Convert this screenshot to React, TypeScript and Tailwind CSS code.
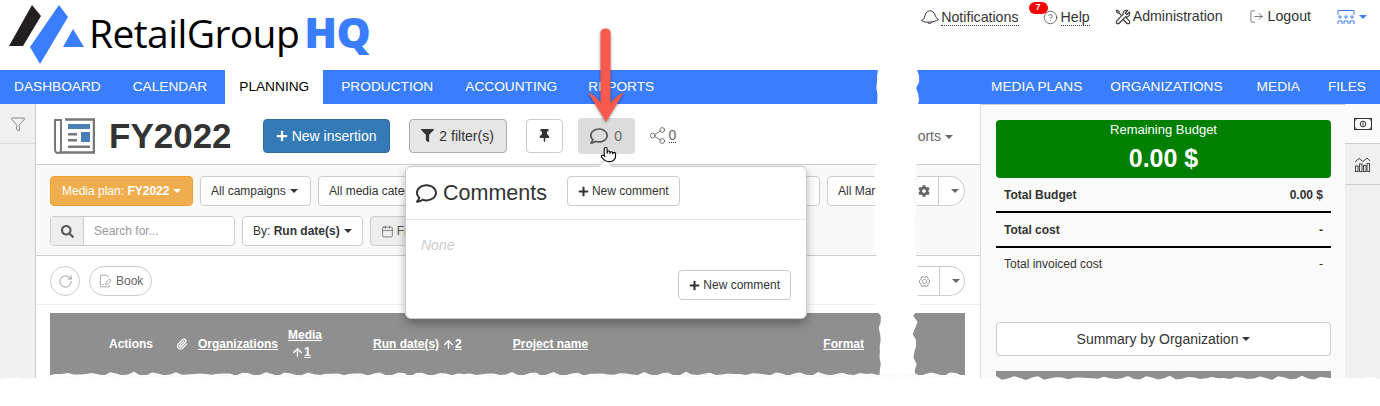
import { CircleHelp, LogOut, Filter, Share2, Calendar, RotateCw, FileSignature, Paperclip, ArrowUp, Pointer } from "lucide-react";
import { FaRegComment, FaFilter, FaThumbtack, FaSearch, FaCog, FaPlus } from "react-icons/fa";
import { LiaToolsSolid } from "react-icons/lia";
import { PiGearSixLight } from "react-icons/pi";

const Caret = () => (
  <span className="ml-1 inline-block h-0 w-0 border-x-4 border-t-4 border-x-transparent border-t-current align-middle" />
);

const NavItem = ({ label, active, className = "" }: { label: string; active?: boolean; className?: string }) => (
  <a className={`flex h-full items-center pt-[1px] text-[13.7px] ${active ? "bg-white text-black" : "text-white"} ${className}`}>{label}</a>
);

const SmallButton = ({ children, className = "" }: { children?: React.ReactNode; className?: string }) => (
  <div className={`flex h-[30px] shrink-0 items-center rounded border border-[#ccc] bg-white px-[10px] text-xs whitespace-nowrap text-[#333] ${className}`}>
    {children}
  </div>
);

// repeatable wobble for the torn paper edges
const wobble = (i: number, amp: number) =>
  (Math.sin(i * 1.7) * 0.5 + Math.sin(i * 4.3 + 1) * 0.3 + Math.sin(i * 9.1 + 2) * 0.2) * amp;

const tornBottom = (base: number, amp: number, width: number, height: number) => {
  let d = `M0 ${base}`;
  for (let x = 0, i = 0; x <= width; x += 6, i++) d += ` L${x} ${(base + wobble(i, amp)).toFixed(1)}`;
  return `${d} L${width} ${height} L0 ${height} Z`;
};

const tornStrip = () => {
  const left: string[] = [];
  const right: string[] = [];
  for (let y = 0, i = 0; y <= 310; y += 6, i++) {
    const l = 5 - (y > 90 && y < 190 ? 2 : 0) + (y > 240 ? 3 : 0);
    const r = 46 - (y > 90 && y < 190 ? 3 : 0) - (y > 240 ? 3 : 0);
    left.push(`L${(l + wobble(i, 2)).toFixed(1)} ${y}`);
    right.unshift(`L${(r + wobble(i + 40, 3)).toFixed(1)} ${y}`);
  }
  return `M5 0 ${left.join(" ")} ${right.join(" ")} Z`;
};

const TornEdges = () => (
  <>
    {/* Strip torn out of the page */}
    <svg className="absolute top-[70px] left-[872px]" width="50" height="310" viewBox="0 0 50 310">
      <path fill="#fff" d={tornStrip()} />
    </svg>
    {/* Pale row below the table head */}
    <svg className="absolute top-[368px] left-[50px]" width="915" height="14" viewBox="0 0 915 14">
      <path fill="#fbfbfb" d={tornBottom(6, 2.5, 915, 14)} />
    </svg>
    {/* Torn bottom of the page */}
    <svg className="absolute top-[370px] left-0" width="1380" height="36" viewBox="0 0 1380 36">
      <path fill="#fff" d={tornBottom(8, 2.5, 1380, 36)} />
    </svg>
  </>
);

const App = () => {
  return (
    <div className="relative h-[406px] w-[1380px] overflow-hidden bg-white font-['Liberation_Sans',sans-serif] text-[#333]">
      {/* Header */}
      <header className="flex h-[70px] justify-between">
        <div className="flex items-start pt-[4px] pl-[9px]">
          <svg width="78" height="62" viewBox="0 0 78 62" className="shrink-0">
            <path fill="#231f20" d="M0 42 L23 1 L32 12 L14 42 Z" />
            <path fill="#3a7eff" d="M21 43 L50 1 L59 13 L31 60 Z" />
            <path fill="#3a7eff" d="M54 43 L64 25 L75 43 Z" />
          </svg>
          <div className="mt-[5px] ml-[2px] flex items-baseline">
            <span className="font-['Open_Sans',sans-serif] text-[39px] leading-[46px] tracking-[-0.6px] text-black">RetailGroup</span>
            <span className="ml-[5px] font-['Open_Sans',sans-serif] text-[43px] leading-[46px] font-extrabold tracking-[-0.5px] text-[#3a7eff]">HQ</span>
          </div>
        </div>
        <div className="flex h-[34px] items-center pr-[13px] text-[14.2px] text-[#333]">
          <div className="relative flex items-center gap-[1px]">
            <svg width="20" height="16" viewBox="0 0 20 16" fill="none" stroke="currentColor" strokeWidth="1">
              <path d="M1.500 11.500 C4.500 10.500 4.500 7.500 5.500 5 C7 1 12 1 14 4 C15.500 6.500 15.500 9 18.500 10.500 C16 12 13 13 10 13 C7 13.500 3.500 13 1.500 11.500 Z" />
              <path d="M7.500 13.300 C8 15 11 15 12 12.800" />
            </svg>
            <span className="border-b border-dotted border-[#333] leading-4">Notifications</span>
            <span className="absolute -top-[7px] -right-[29px] flex h-[12px] w-[19px] items-center justify-center rounded-full bg-[#f00] text-[9px] font-bold text-white">7</span>
          </div>
          <div className="ml-[24px] flex items-center gap-[3px]">
            <CircleHelp size={15} strokeWidth={1.1} />
            <span className="border-b border-dotted border-[#333] leading-4">Help</span>
          </div>
          <div className="ml-[24px] flex items-center gap-[1px]">
            <LiaToolsSolid size={18} />
            <span>Administration</span>
          </div>
          <div className="ml-[26px] flex items-center gap-[4px]">
            <LogOut size={15} strokeWidth={1.1} className="text-[#444]" />
            <span>Logout</span>
          </div>
          <div className="ml-[26px] flex items-center text-[#3a7eff]">
            <svg width="18" height="16" viewBox="0 0 18 16" fill="none" stroke="currentColor" strokeWidth="1">
              <path d="M1 6 V1.500 H17 V6" />
              <circle cx="3" cy="8" r="1.200" />
              <circle cx="9" cy="8" r="1.200" />
              <circle cx="15" cy="8" r="1.200" />
              <path d="M1 15 V12 H5 V15 M7 15 V12 H11 V15 M13 15 V12 H17 V15" />
            </svg>
            <Caret />
          </div>
        </div>
      </header>

      {/* Nav */}
      <nav className="flex h-[34px] justify-between bg-[#3a7eff]">
        <div className="flex h-full">
          <NavItem label="DASHBOARD" className="pr-[16px] pl-[14px]" />
          <NavItem label="CALENDAR" className="pr-[18px] pl-[16px]" />
          <NavItem label="PLANNING" active className="px-[14px]" />
          <NavItem label="PRODUCTION" className="pr-[16px] pl-[18px]" />
          <NavItem label="ACCOUNTING" className="pr-[15px] pl-[16px]" />
          <NavItem label="REPORTS" className="px-[16px]" />
        </div>
        <div className="flex h-full">
          <NavItem label="MEDIA PLANS" className="px-[14px]" />
          <NavItem label="ORGANIZATIONS" className="pr-[17px] pl-[14px]" />
          <NavItem label="MEDIA" className="pr-[14px] pl-[17px]" />
          <NavItem label="FILES" className="px-[14px]" />
        </div>
      </nav>

      {/* Body */}
      <div className="flex h-[302px]">
        <aside className="w-[36px] shrink-0 border-r border-[#ccc] bg-[#f0f0f0]">
          <div className="flex h-[40px] items-center justify-center border-b border-[#ddd]">
            <Filter size={16} strokeWidth={1} className="text-[#555]" />
          </div>
        </aside>

        <main className="min-w-0 flex-1 border-r border-[#ddd]">
          {/* Title row */}
          <div className="flex h-[61px] items-center border-b border-[#ccc] pt-[3px] pl-[17px]">
            <svg width="42" height="36" viewBox="0 0 42 36" fill="none" className="shrink-0">
              <path stroke="#777" strokeWidth="2" d="M2 2 V31 Q2 35 5 35 Q8 35 8 31 V2 Z" />
              <path stroke="#777" strokeWidth="2.500" d="M12 1.500 H41 V34.500 H7" />
              <rect x="15" y="6" width="22" height="5" fill="#4a7fb5" />
              <rect x="15" y="15" width="9" height="2.500" fill="#777" />
              <rect x="15" y="21" width="9" height="2.500" fill="#777" />
              <rect x="28" y="14" width="9" height="10" fill="#4a7fb5" />
              <rect x="15" y="27.500" width="22" height="2.500" fill="#777" />
            </svg>
            <h1 className="ml-[14px] text-[35px] leading-none font-bold text-[#333]">FY2022</h1>
            <div className="ml-[31px] flex h-[34px] w-[127px] items-center justify-center rounded border border-[#2e6da4] bg-[#337ab7] text-sm text-white">
              <FaPlus size={12} className="mr-[4px]" />
              New insertion
            </div>
            <div className="ml-[19px] flex h-[34px] w-[98px] items-center justify-center rounded border border-[#adadad] bg-[#e6e6e6] text-sm text-[#333]">
              <FaFilter size={13} className="mr-[5px]" />
              2 filter(s)
            </div>
            <div className="ml-[19px] flex h-[34px] w-[37px] items-center justify-center rounded border border-[#ccc] bg-white">
              <FaThumbtack size={13} />
            </div>
            <div className="ml-[15px] flex h-[36px] w-[57px] items-center justify-center gap-[6px] rounded bg-[#dcdcdc] text-sm text-[#666]">
              <FaRegComment size={18} className="text-[#555]" />
              0
            </div>
            <div className="ml-[13px] flex items-center gap-[2px] text-sm text-[#666]">
              <Share2 size={19} strokeWidth={1.1} />
              <span className="border-b border-dotted border-[#333] leading-[14px]">0</span>
            </div>
            <div className="ml-auto pr-[27px] text-sm text-[#666]">
              Reports
              <Caret />
            </div>
          </div>

          {/* Filters */}
          <div className="flex h-[91px] flex-col gap-[10px] border-b border-[#ccc] bg-[#f9f9f9] pt-[11px] pl-[14px]">
            <div className="flex gap-[7px]">
              <div className="flex h-[30px] w-[143px] shrink-0 items-center rounded border border-[#eea236] bg-[#f0ad4e] pl-[11px] text-xs whitespace-nowrap text-white">
                Media plan:&nbsp;<b>FY2022</b>
                <Caret />
              </div>
              <SmallButton className="w-[111px]">All campaigns<Caret /></SmallButton>
              <SmallButton className="w-[182px]">All media categories</SmallButton>
              <SmallButton className="w-[313px]" />
              <SmallButton className="w-[80px]">All Markets</SmallButton>
              <div className="ml-[3px] flex h-[30px] w-[48px] shrink-0 items-center rounded-r-[15px] border border-l-0 border-[#ccc] bg-white text-[#666]">
                <FaCog size={12} className="ml-[1px]" />
                <span className="ml-[8px] flex h-full items-center border-l border-[#ccc] pl-[8px]"><Caret /></span>
              </div>
            </div>
            <div className="flex gap-[7px]">
              <div className="flex h-[30px] w-[185px] overflow-hidden rounded border border-[#ccc] bg-white">
                <div className="flex w-[33px] items-center justify-center border-r border-[#ccc] bg-[#eee] text-[#555]">
                  <FaSearch size={13} />
                </div>
                <span className="flex items-center px-[10px] text-xs text-[#999]">Search for...</span>
              </div>
              <SmallButton>By:&nbsp;<b>Run date(s)</b><Caret /></SmallButton>
              <div className="flex h-[30px] w-[80px] items-center gap-[3px] rounded border border-[#ccc] bg-[#eee] px-[10px] text-xs text-[#555]">
                <Calendar size={13} strokeWidth={1.25} />
                From
              </div>
            </div>
          </div>

          {/* Toolbar */}
          <div className="flex h-[49px] items-center border-b border-[#eee] pt-[2px] pl-[14px]">
            <div className="flex size-[30px] items-center justify-center rounded-full border border-[#ccc] text-[#666]">
              <RotateCw size={15} strokeWidth={1} />
            </div>
            <div className="ml-[9px] flex h-[30px] items-center gap-[4px] rounded-full border border-[#ccc] px-[8px] text-xs text-[#666]">
              <FileSignature size={14} strokeWidth={1} />
              Book
            </div>
            <div className="mr-[15px] ml-auto flex h-[30px] w-[48px] items-center rounded-r-[15px] border border-l-0 border-[#ccc] text-[#666]">
              <PiGearSixLight size={13} className="ml-[1px]" />
              <span className="ml-[8px] flex h-full items-center border-l border-[#ccc] pl-[8px]"><Caret /></span>
            </div>
          </div>

          {/* Table head */}
          <div className="mt-[8px] mr-[15px] ml-[14px] flex h-[62px] items-center bg-[#8f8f8f] text-xs font-bold text-white">
            <span className="ml-[59px]">Actions</span>
            <Paperclip size={12} strokeWidth={2.500} className="ml-[23px]" />
            <span className="ml-[10px] underline">Organizations</span>
            <div className="ml-[10px] flex flex-col items-start leading-[17px]">
              <span className="underline">Media</span>
              <span className="ml-[3px] flex items-center"><ArrowUp size={13} strokeWidth={2.500} /><span className="underline">1</span></span>
            </div>
            <span className="ml-[51px] flex items-center"><span className="underline">Run date(s)</span><ArrowUp size={13} strokeWidth={2.500} className="ml-[3px]" /><span className="underline">2</span></span>
            <span className="ml-[51px] underline">Project name</span>
            <span className="mr-[101px] ml-auto underline">Format</span>
          </div>
        </main>

        {/* Right panel */}
        <section className="w-[364px] shrink-0 border-t border-[#ccc] bg-[#fafafa] pt-[15px] pr-[14px] pl-[15px]">
          <div className="flex h-[58px] flex-col items-center rounded bg-[#008000] text-white">
            <span className="mt-[2px] text-[13px] leading-[15px]">Remaining Budget</span>
            <span className="mt-[7px] text-[25px] leading-[28px] font-bold">0.00 $</span>
          </div>
          <div className="flex h-[35px] items-center justify-between border-b-2 border-black px-[8px] text-xs font-bold"><span>Total Budget</span><span>0.00 $</span></div>
          <div className="flex h-[35px] items-center justify-between border-b-2 border-black px-[8px] text-xs font-bold"><span>Total cost</span><span>-</span></div>
          <div className="flex h-[31px] items-center justify-between px-[8px] text-xs"><span>Total invoiced cost</span><span>-</span></div>
          <div className="mt-[43px] flex h-[34px] items-center justify-center rounded border border-[#ccc] bg-white text-sm">
            Summary by Organization
            <Caret />
          </div>
          <div className="mt-[15px] h-[20px] bg-[#8f8f8f]" />
        </section>

        <aside className="w-[35px] shrink-0 bg-[#f0f0f0]">
          <div className="flex h-[40px] items-center justify-center border-b border-[#ccc] bg-[#fafafa]">
            <svg width="18" height="12" viewBox="0 0 18 12" fill="none" stroke="#333" strokeWidth="1">
              <rect x=".5" y=".5" width="17" height="11" />
              <path d="M.5 3 L3 .5 M15 .5 L17.500 3 M.5 9 L3 11.500 M15 11.500 L17.500 9" />
              <circle cx="9" cy="6" r="2.800" />
              <path d="M9 4.500 V7.500" />
            </svg>
          </div>
          <div className="flex h-[41px] items-center justify-center border-b border-[#ccc]">
            <svg width="17" height="16" viewBox="0 0 17 16" fill="none" stroke="#444" strokeWidth="1">
              <path d="M1 6 L5 2.500 L9 5.500 L13 2 L16 5" />
              <rect x="1.500" y="10" width="2.500" height="5.500" />
              <rect x="5.500" y="8" width="2.500" height="7.500" />
              <rect x="9.500" y="9.500" width="2.500" height="6" />
              <rect x="13" y="7.500" width="2.500" height="8" />
            </svg>
          </div>
        </aside>
      </div>

      <TornEdges />

      {/* Comments popover */}
      <div className="absolute top-[166px] left-[405px] h-[153px] w-[402px] rounded-md border border-[#ccc] bg-white shadow-[0_5px_10px_rgba(0,0,0,0.3)]">
        <div className="absolute -top-[6px] left-[194px] size-[11px] rotate-45 border-t border-l border-[#ccc] bg-white" />
        <div className="flex h-[53px] items-center border-b border-[#e5e5e5] pl-[10px]">
          <FaRegComment size={21} />
          <span className="ml-[6px] text-[21.500px]">Comments</span>
          <SmallButton className="ml-[20px] -translate-y-[2px]"><FaPlus size={11} className="mr-[3px]" />New comment</SmallButton>
        </div>
        <div className="px-[15px] pt-[15px] text-sm text-[#ccc] italic">None</div>
        <div className="mt-[15px] flex justify-end pr-[15px]">
          <SmallButton><FaPlus size={11} className="mr-[3px]" />New comment</SmallButton>
        </div>
      </div>

      {/* Hand cursor */}
      <Pointer size={17} fill="#fff" strokeWidth={1.5} className="absolute top-[146px] left-[600px] text-black" />

      {/* Annotation arrow */}
      <svg className="absolute top-[24px] left-[585px]" width="44" height="104" viewBox="0 0 44 104">
        <path fill="#fa5a4e" stroke="#fa5a4e" strokeWidth="1" strokeLinejoin="round" style={{ filter: "drop-shadow(0 1px 1.5px rgba(0,0,0,.45))" }} d="M16 9 Q16 5 20.500 5 Q25 5 25 9 L25 80 Q30 73 38 69 L21 97 L4 69 Q12 73 16 80 Z" />
      </svg>
    </div>
  );
};

export default App;
